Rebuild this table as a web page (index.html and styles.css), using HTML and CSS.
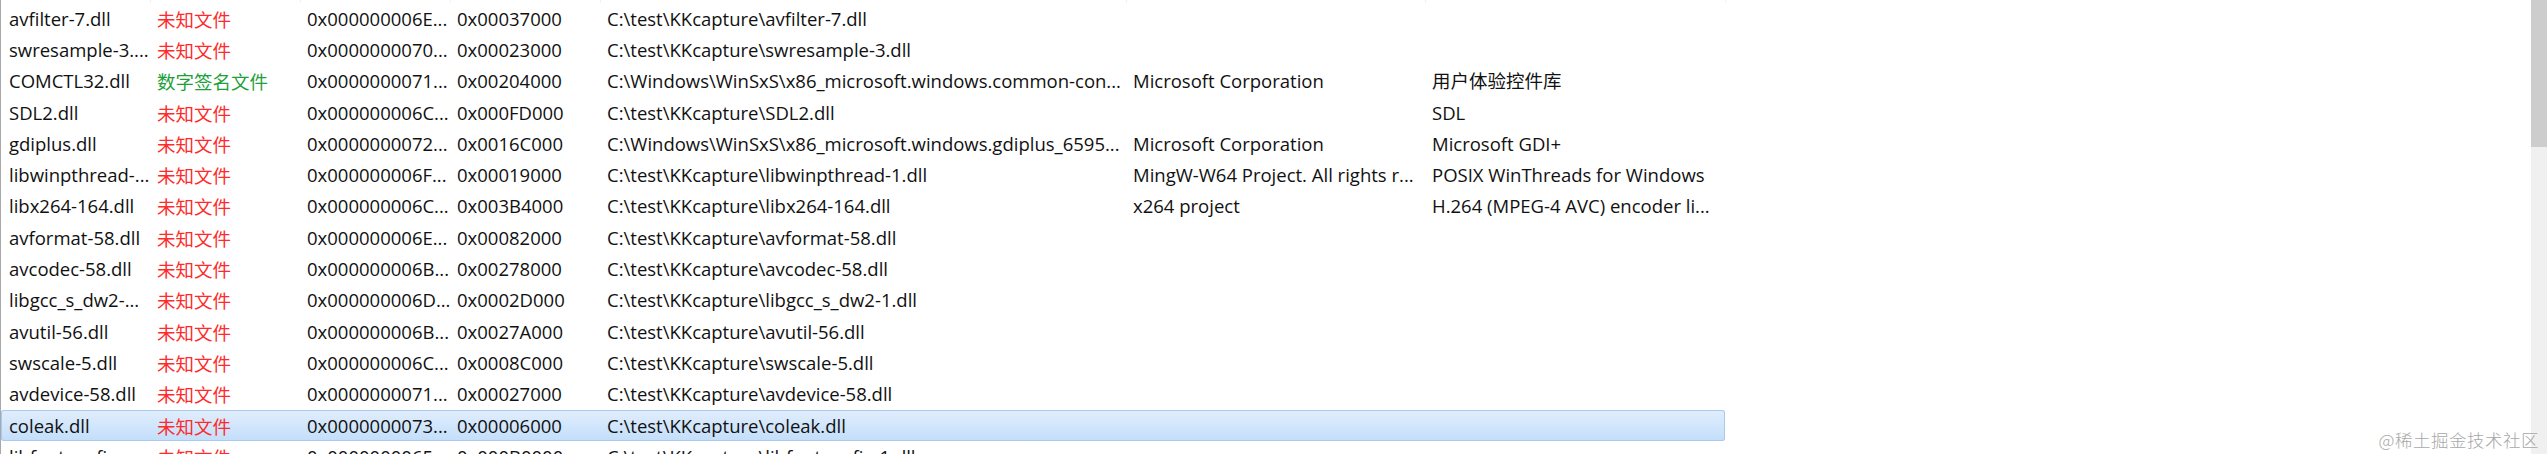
FILE: index.html
```html
<!DOCTYPE html>
<html lang="zh-CN">
<head>
<meta charset="utf-8">
<title>模块列表</title>
<link rel="stylesheet" href="styles.css">
</head>
<body>
<div class="window">
  <div class="list">
    <div class="header">
      <span></span><span></span><span></span><span></span><span></span><span></span><span></span>
    </div>
    <div class="row"><span class="name">avfilter-7.dll</span><span class="unk">未知文件</span><span>0x000000006E...</span><span>0x00037000</span><span>C:\test\KKcapture\avfilter-7.dll</span><span></span><span></span></div>
    <div class="row"><span class="name">swresample-3....</span><span class="unk">未知文件</span><span>0x0000000070...</span><span>0x00023000</span><span>C:\test\KKcapture\swresample-3.dll</span><span></span><span></span></div>
    <div class="row"><span class="name">COMCTL32.dll</span><span class="signed">数字签名文件</span><span>0x0000000071...</span><span>0x00204000</span><span>C:\Windows\WinSxS\x86_microsoft.windows.common-con...</span><span>Microsoft Corporation</span><span>用户体验控件库</span></div>
    <div class="row"><span class="name">SDL2.dll</span><span class="unk">未知文件</span><span>0x000000006C...</span><span>0x000FD000</span><span>C:\test\KKcapture\SDL2.dll</span><span></span><span>SDL</span></div>
    <div class="row"><span class="name">gdiplus.dll</span><span class="unk">未知文件</span><span>0x0000000072...</span><span>0x0016C000</span><span>C:\Windows\WinSxS\x86_microsoft.windows.gdiplus_6595...</span><span>Microsoft Corporation</span><span>Microsoft GDI+</span></div>
    <div class="row"><span class="name">libwinpthread-...</span><span class="unk">未知文件</span><span>0x000000006F...</span><span>0x00019000</span><span>C:\test\KKcapture\libwinpthread-1.dll</span><span>MingW-W64 Project. All rights r...</span><span>POSIX WinThreads for Windows</span></div>
    <div class="row"><span class="name">libx264-164.dll</span><span class="unk">未知文件</span><span>0x000000006C...</span><span>0x003B4000</span><span>C:\test\KKcapture\libx264-164.dll</span><span>x264 project</span><span>H.264 (MPEG-4 AVC) encoder li...</span></div>
    <div class="row"><span class="name">avformat-58.dll</span><span class="unk">未知文件</span><span>0x000000006E...</span><span>0x00082000</span><span>C:\test\KKcapture\avformat-58.dll</span><span></span><span></span></div>
    <div class="row"><span class="name">avcodec-58.dll</span><span class="unk">未知文件</span><span>0x000000006B...</span><span>0x00278000</span><span>C:\test\KKcapture\avcodec-58.dll</span><span></span><span></span></div>
    <div class="row"><span class="name">libgcc_s_dw2-...</span><span class="unk">未知文件</span><span>0x000000006D...</span><span>0x0002D000</span><span>C:\test\KKcapture\libgcc_s_dw2-1.dll</span><span></span><span></span></div>
    <div class="row"><span class="name">avutil-56.dll</span><span class="unk">未知文件</span><span>0x000000006B...</span><span>0x0027A000</span><span>C:\test\KKcapture\avutil-56.dll</span><span></span><span></span></div>
    <div class="row"><span class="name">swscale-5.dll</span><span class="unk">未知文件</span><span>0x000000006C...</span><span>0x0008C000</span><span>C:\test\KKcapture\swscale-5.dll</span><span></span><span></span></div>
    <div class="row"><span class="name">avdevice-58.dll</span><span class="unk">未知文件</span><span>0x0000000071...</span><span>0x00027000</span><span>C:\test\KKcapture\avdevice-58.dll</span><span></span><span></span></div>
    <div class="row selected"><span class="name">coleak.dll</span><span class="unk">未知文件</span><span>0x0000000073...</span><span>0x00006000</span><span>C:\test\KKcapture\coleak.dll</span><span></span><span></span></div>
    <div class="row"><span class="name">libfontconfi...</span><span class="unk">未知文件</span><span>0x0000000065...</span><span>0x000B0000</span><span>C:\test\KKcapture\libfontconfig-1.dll</span><span></span><span></span></div>
  </div>
  <div class="scrollbar"><div class="thumb"></div></div>
</div>
<div class="watermark">@稀土掘金技术社区</div>
</body>
</html>
```
FILE: styles.css
```css
html, body {
  margin: 0;
  padding: 0;
  background: #ffffff;
}
body {
  width: 2547px;
  height: 454px;
  overflow: hidden;
  position: relative;
  font-family: "Open Sans", "Noto Sans CJK SC", sans-serif;
  font-size: 18.5px;
  color: #111111;
}
.window {
  display: flex;
  height: 454px;
}
.list {
  flex: 1;
  border-left: 1px solid #a8a8a8;
  overflow: hidden;
}
.header {
  display: grid;
  grid-template-columns: 150px 150px 150px 150px 526px 299px 300px;
  height: 3px;
}
.header span {
  border-right: 1px solid #f1f1f1;
}
.row {
  display: grid;
  grid-template-columns: 150px 150px 150px 150px 526px 299px 300px;
  height: 31.3px;
  width: 1724px;
  box-sizing: border-box;
  align-items: center;
}
.row span {
  white-space: nowrap;
  overflow: hidden;
  padding-left: 6px;
  line-height: 30px;
}
.row span.name {
  padding-left: 8px;
}
.unk {
  color: #ff2a2a;
  font-family: "Noto Sans CJK SC", sans-serif;
}
.signed {
  color: #1f9f3a;
  font-family: "Noto Sans CJK SC", sans-serif;
}
.row.selected {
  border-radius: 3px;
  box-shadow: inset 0 0 0 1px #a9c9ee;
  background: linear-gradient(#e1eefd, #c3defa);
}
.scrollbar {
  width: 16px;
  background: #f0f0f0;
  display: flex;
  flex-direction: column;
}
.thumb {
  height: 147px;
  background: #cdcdcd;
}
.watermark {
  position: absolute;
  right: 8px;
  bottom: 2px;
  font-family: "Noto Sans CJK SC", sans-serif;
  font-weight: 300;
  font-size: 17.5px;
  color: #a8a8a8;
  letter-spacing: 0.5px;
}
```
